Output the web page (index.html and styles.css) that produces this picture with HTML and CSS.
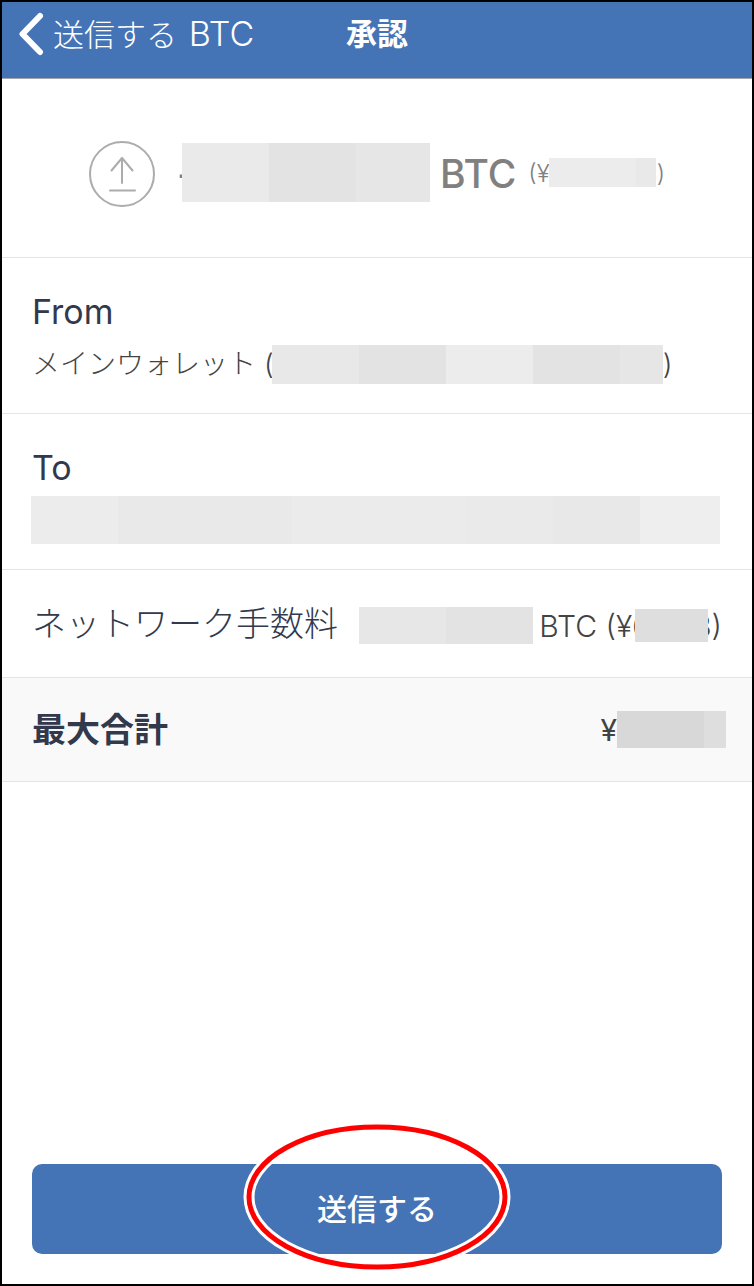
FILE: index.html
```html
<!DOCTYPE html>
<html lang="ja">
<head>
<meta charset="utf-8">
<meta name="viewport" content="width=device-width, initial-scale=1">
<title>承認</title>
<link rel="stylesheet" href="styles.css">
</head>
<body>
<div class="screen">
  <header class="nav">
    <a class="back" href="#">
      <svg class="chevron" viewBox="0 0 26 44" aria-hidden="true"><path d="M22 4 4.500 22 22 40"/></svg>
      <span>送信する <span class="coin">BTC</span></span>
    </a>
    <h1 class="title">承認</h1>
  </header>
  <main class="content">
    <section class="amount">
      <svg class="send-icon" viewBox="0 0 66 66" aria-hidden="true">
        <circle cx="33" cy="33" r="32"/>
        <path d="M33 42V17M22.500 29.500 33 17l10.500 12.500M21 49.500h25"/>
      </svg>
      <p class="value"><span>-</span><span class="mask mask-amount"></span><span class="unit">BTC</span></p>
      <p class="fiat"><span>(¥</span><span class="mask mask-fiat"></span><span>)</span></p>
    </section>
    <section class="row party">
      <h2 class="label">From</h2>
      <p class="wallet"><span>メインウォレット (</span><span class="mask mask-wallet"></span><span>)</span></p>
    </section>
    <section class="row party">
      <h2 class="label">To</h2>
      <div class="mask mask-address"></div>
    </section>
    <section class="row fee">
      <h2 class="label">ネットワーク手数料</h2>
      <p class="cost"><span class="mask mask-fee"></span><span class="fee-unit">BTC (¥6</span><span class="mask mask-fee-fiat"></span><span class="fee-end">8)</span></p>
    </section>
    <section class="row total">
      <h2 class="label strong">最大合計</h2>
      <p class="cost"><span>¥</span><span class="mask mask-total"></span></p>
    </section>
  </main>
  <footer class="footer">
    <button class="send" type="button">送信する</button>
    <svg class="highlight" viewBox="0 0 268 150" aria-hidden="true">
      <ellipse class="halo" cx="134" cy="75" rx="128" ry="70"/>
      <ellipse class="ring" cx="134" cy="75" rx="128" ry="70"/>
    </svg>
  </footer>
</div>
</body>
</html>
```
FILE: styles.css
```css
* {
  box-sizing: border-box;
}

body {
  margin: 0;
  background: #fff;
  color: #434343;
  font-family: Inter, "Noto Sans CJK JP", sans-serif;
  font-weight: 300;
}

h1, h2, p {
  margin: 0;
}

.screen {
  display: flex;
  flex-direction: column;
  min-height: 100vh;
  border: 2px solid #000;
}

.nav {
  display: grid;
  grid-template-columns: 1fr auto 1fr;
  align-items: center;
  height: 77px;
  padding: 0 16px 12px;
  border-bottom: 1px solid #a3a6ab;
  background: #4574b6;
  color: #fff;
}

.back {
  display: flex;
  align-items: center;
  gap: 9px;
  color: inherit;
  font-size: 31px;
  line-height: 44px;
  text-decoration: none;
  white-space: nowrap;
}

.coin {
  margin-left: 3px;
  font-size: 34px;
}

.chevron {
  width: 26px;
  height: 44px;
  fill: none;
  stroke: #fff;
  stroke-width: 6;
  stroke-linecap: round;
  stroke-linejoin: round;
}

.title {
  font-size: 31px;
  font-weight: 700;
  line-height: 44px;
}

.content {
  flex: 1;
}

.amount {
  display: flex;
  align-items: center;
  justify-content: center;
  height: 179px;
  padding-top: 12px;
  border-bottom: 1px solid #e4e4e4;
  color: #808080;
}

.send-icon {
  width: 66px;
  height: 66px;
  margin-right: 22px;
  fill: none;
  stroke: #acacac;
  stroke-width: 2;
  stroke-linecap: round;
  stroke-linejoin: round;
}

.value, .fiat, .wallet, .cost {
  display: flex;
  align-items: center;
  white-space: nowrap;
}

.value {
  font-size: 39px;
  font-weight: 500;
  line-height: 60px;
}

.unit {
  margin: 0 12px 0 10px;
}

.fiat {
  font-size: 24px;
  line-height: 30px;
}

.mask {
  z-index: 1;
  flex: none;
  background: #e8e8e8;
}

.mask-amount {
  width: 248px;
  height: 59px;
  margin: 0 0 4px -13px;
  background: linear-gradient(90deg, #eaeaea 87px, #e3e3e3 87px 174px, #e6e6e6 174px);
}

.mask-fiat {
  width: 107px;
  height: 29px;
  margin: 0 1px 4px -1px;
  background: linear-gradient(90deg, #ececec 87px, #e9e9e9 87px);
}

.mask-wallet {
  width: 391px;
  height: 39px;
  margin-left: -2px;
  background: linear-gradient(90deg, #e8e8e8 87px, #e3e3e3 87px 174px, #ececec 174px 261px, #e3e3e3 261px 348px, #e6e6e6 348px);
}

.mask-address {
  height: 48px;
  background: linear-gradient(90deg, #ececec 87px, #e9e9e9 87px 261px, #ebebeb 261px 435px, #eaeaea 435px 522px, #e8e8e8 522px 609px, #eee 609px);
}

.mask-fee {
  width: 174px;
  height: 37px;
  background: linear-gradient(90deg, #e7e7e7 87px, #e3e3e3 87px);
}

.mask-fee-fiat {
  width: 73px;
  height: 33px;
  margin-left: -15px;
  background: #dedede;
}

.mask-total {
  width: 109px;
  height: 37px;
  background: linear-gradient(90deg, #d8d8d8 87px, #dedede 87px);
}

.row {
  padding: 0 30px;
  border-bottom: 1px solid #e4e4e4;
}

.label {
  color: #32394d;
  font-size: 34px;
  font-weight: 400;
  line-height: 48px;
  white-space: nowrap;
}

.party {
  height: 156px;
  padding-top: 30px;
}

.party .mask-address {
  margin: 4px 2px 0 -1px;
}

.wallet {
  margin-top: 8px;
  font-size: 28px;
  line-height: 40px;
}

.fee, .total {
  display: flex;
  align-items: center;
  justify-content: space-between;
}

.fee {
  height: 108px;
}

.fee .label {
  font-weight: 300;
}

.fee .cost {
  padding-top: 4px;
}

.fee-unit {
  margin-left: 6px;
}

.fee-end {
  margin-left: -15px;
}

.cost {
  font-size: 30px;
  line-height: 40px;
}

.total {
  height: 104px;
  padding-right: 26px;
  background: #f9f9f9;
}

.total .cost {
  font-weight: 400;
}

.label.strong {
  font-weight: 700;
}

.footer {
  position: relative;
  padding: 30px;
}

.send {
  display: block;
  width: 100%;
  height: 90px;
  padding: 0 0 4px;
  border: 0;
  border-radius: 10px;
  background: #4574b6;
  color: #fff;
  font: inherit;
  font-size: 30px;
  font-weight: 500;
}

.highlight {
  position: absolute;
  top: 50%;
  left: 50%;
  width: 268px;
  height: 150px;
  transform: translate(-50%, -50%);
  margin-top: -12px;
  fill: none;
  pointer-events: none;
}

.halo {
  stroke: #fff;
  stroke-width: 11;
}

.ring {
  stroke: #f00;
  stroke-width: 5;
}
```
